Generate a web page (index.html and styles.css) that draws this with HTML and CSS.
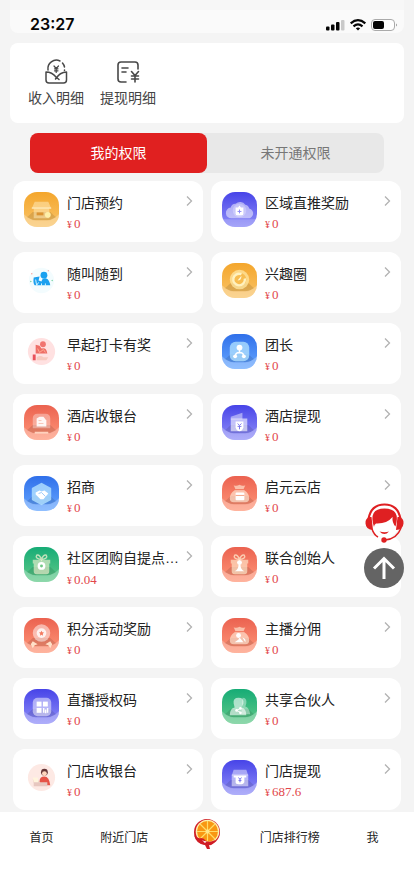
FILE: index.html
```html
<!DOCTYPE html>
<html lang="zh-CN">
<head>
<meta charset="utf-8">
<meta name="viewport" content="width=device-width, initial-scale=1">
<title>我的权限</title>
<link rel="stylesheet" href="styles.css">
</head>
<body>
<svg class="defs" aria-hidden="true">
  <symbol id="ground" viewBox="0 0 36 36">
    <path d="M3 26 9 20.500H27L33 26 27 29H9Z" fill="#000" opacity=".11"/>
    <path d="M0 23Q6 29 12 29H24Q30 29 36 23V36H0Z" fill="#fff" opacity=".28"/>
  </symbol>
  <symbol id="chevron" viewBox="0 0 8 12">
    <path d="M2 1.500 6.500 6 2 10.500" fill="none" stroke="#b2b2b2" stroke-width="1.300"/>
  </symbol>
  <symbol id="bag" viewBox="0 0 36 36">
    <path d="M12 9.500q3 1.500 6-.5 3 2 6 .5l-2 4.500q6 4 6 9 0 4-4 4H12q-4 0-4-4 0-5 6-9Z" fill="#ffe9d6" opacity=".65"/>
    <path d="M13.500 14h9" stroke="#f2765c"/>
  </symbol>
  <symbol id="gift" viewBox="0 0 36 36">
    <path d="M10 17h16v8q0 3-3 3H13q-3 0-3-3ZM9 13h18v4H9Z" fill="#fff3d6" opacity=".6"/>
    <path d="M18 13q-7-1-5-4.500 3-1 5 4.500 2-5.500 5-4.500 2 3.500-5 4.500Z" fill="none" stroke="#fff3d6" stroke-width="1.500" opacity=".7"/>
  </symbol>
</svg>

<header class="status">
  <time class="clock">23:27</time>
  <svg class="signals" viewBox="0 0 72 14" aria-hidden="true">
    <g fill="#050505"><rect x="0" y="8.500" width="3.500" height="4" rx="1"/><rect x="5" y="6.500" width="3.500" height="6" rx="1"/><rect x="10" y="4" width="3.500" height="8.500" rx="1"/></g>
    <rect x="15" y="2" width="3.500" height="10.500" rx="1" fill="#c9c9c9"/>
    <g fill="none" stroke="#050505" stroke-width="2.200"><path d="M24.700 5.300Q32-1 39.300 5.300M27.500 8.300Q32 4.500 36.500 8.300"/></g>
    <path d="M29.800 10.300Q32 8.500 34.200 10.300L32 12.600Z" fill="#050505"/>
    <rect x="45.500" y="1.500" width="23" height="11" rx="3.500" fill="#fff" stroke="#aaa"/>
    <rect x="47" y="3" width="11" height="8" rx="2" fill="#050505"/>
    <path d="M70 5.500q2 1.500 0 3Z" fill="#999"/>
  </svg>
</header>

<main>
  <section class="shortcuts">
    <a class="shortcut" href="#income">
      <svg viewBox="0 0 28 28" fill="none" stroke="#484848" stroke-width="1.500" stroke-linecap="round" stroke-linejoin="round" aria-hidden="true">
        <path d="M6 12A8.500 8.500 0 0 1 18 3M20.500 5A8.500 8.500 0 0 1 22.500 9M22.500 12v.5"/>
        <path d="M14 19Q10 14 4 14V22q0 3 3 3H21.500q3 0 3-3V14Q18 14 13.500 21M14 19 17 21.500"/>
        <path d="M12 8 14.200 10.500 16.500 8M14.200 10.500V14.500M12.500 10.800h3.500M12.500 12.800h3.500" stroke-width="1.200"/>
      </svg>
      <span>收入明细</span>
    </a>
    <a class="shortcut" href="#withdraw">
      <svg viewBox="0 0 28 28" fill="none" stroke="#484848" stroke-width="1.600" stroke-linecap="round" aria-hidden="true">
        <path d="M24 11V7q0-3-3-3H7Q4 4 4 7V21q0 3 3 3h5M8 10h6M8 14h4"/>
        <path d="m17.500 13.500 3.500 4 3.500-4M21 17.500V24M17.500 18h7M17.500 21h7"/>
      </svg>
      <span>提现明细</span>
    </a>
  </section>

  <div class="tabs">
    <button class="tab active" type="button">我的权限</button>
    <button class="tab" type="button">未开通权限</button>
  </div>

  <section class="grid">
    <a class="card" href="#c1">
      <svg class="icon orange" viewBox="0 0 36 36" aria-hidden="true"><use href="#ground"/><path d="M11 10h14l3 7H8ZM10 17h16v10H10Z" fill="#ffedc0" opacity=".5"/><path d="M8 16.500h20" stroke="#fff4cf"/><rect x="13" y="21" width="7" height="3" fill="#dc9331"/><circle cx="24.500" cy="23.500" r="3" fill="#fff0a8"/></svg>
      <span class="info"><span class="title">门店预约</span><span class="price"><small>¥</small>0</span></span>
      <svg class="arrow" aria-hidden="true"><use href="#chevron"/></svg>
    </a>
    <a class="card" href="#c2">
      <svg class="icon violet" viewBox="0 0 36 36" aria-hidden="true"><path d="M0 28h36v8H0Z" fill="#fff" opacity=".2"/><path d="M10 27a5.500 5.500 0 0 1-1-11 5 5 0 0 1 5-4 7 7 0 0 1 10 1 5 5 0 0 1 4 4 5 5 0 0 1-2 10Z" fill="#fff" opacity=".5"/><circle cx="18" cy="19" r="7" fill="#fff" opacity=".25"/><path d="m18 14 1.500 2H22v6q0 2-2 2h-4q-2 0-2-2v-6h2.500Z" fill="#fff"/><path d="M16 20h4M18 18v4" stroke="#8d8af5"/></svg>
      <span class="info"><span class="title">区域直推奖励</span><span class="price"><small>¥</small>0</span></span>
      <svg class="arrow" aria-hidden="true"><use href="#chevron"/></svg>
    </a>
    <a class="card" href="#c3">
      <svg class="icon" viewBox="0 0 36 36" aria-hidden="true"><circle cx="18" cy="18" r="13" fill="#f3fcfe"/><circle cx="20.500" cy="12.500" r="3.500" fill="#1ba0ef"/><path d="m10 15 6-1-1 4 3 1q1-4 5-3 3 1 4 7H11q-2-2-1-8Z" fill="#1ba0ef"/><path d="m12 17 1 6 2-3m3 1v3m4-3v3" stroke="#d5f5ff" fill="none"/><g fill="#f6a7a2"><circle cx="8" cy="11" r=".8"/><circle cx="25" cy="8" r=".7"/></g><g fill="#7bd5a5"><circle cx="7" cy="19" r=".8"/><circle cx="29" cy="18" r=".8"/></g></svg>
      <span class="info"><span class="title">随叫随到</span><span class="price"><small>¥</small>0</span></span>
      <svg class="arrow" aria-hidden="true"><use href="#chevron"/></svg>
    </a>
    <a class="card" href="#c4">
      <svg class="icon orange" viewBox="0 0 36 36" aria-hidden="true"><use href="#ground"/><circle cx="18" cy="17" r="10" fill="#ffe7a1" opacity=".75"/><circle cx="18" cy="17" r="7" fill="#f8bd51"/><path d="M20 11.500A6 6 0 1 0 23.500 16" fill="none" stroke="#fff1bf" stroke-width="2.500"/><path d="m16 18 4-5q0 5-4 5Z" fill="#fff8d7"/></svg>
      <span class="info"><span class="title">兴趣圈</span><span class="price"><small>¥</small>0</span></span>
      <svg class="arrow" aria-hidden="true"><use href="#chevron"/></svg>
    </a>
    <a class="card" href="#c5">
      <svg class="icon" viewBox="0 0 36 36" aria-hidden="true"><circle cx="18" cy="18" r="14" fill="#ffe1e1"/><circle cx="19.500" cy="10.500" r="3" fill="#f17470"/><path d="m12 11 4 1 2 3q5-2 6 5H12Z" fill="#ee6e67"/><path d="m14 15 2 4 4-3 2 3" stroke="#ffad93" fill="none"/><path d="M9 21h3v6H9Z" fill="#e9525b"/><path d="M13 24q4-3 7 0h5l-2 3H13Z" fill="#f7cac0"/></svg>
      <span class="info"><span class="title">早起打卡有奖</span><span class="price"><small>¥</small>0</span></span>
      <svg class="arrow" aria-hidden="true"><use href="#chevron"/></svg>
    </a>
    <a class="card" href="#c6">
      <svg class="icon blue" viewBox="0 0 36 36" aria-hidden="true"><use href="#ground"/><rect x="8" y="8" width="20" height="20" rx="6" fill="#b4e4ff" opacity=".75"/><circle cx="18" cy="14" r="3" fill="#fff"/><path d="M18 16v4M14 22q0-3 4-3t4 3" fill="none" stroke="#fff" stroke-width="1.500"/><circle cx="13.500" cy="23" r="2" fill="#fff"/><circle cx="22.500" cy="23" r="2" fill="#fff"/></svg>
      <span class="info"><span class="title">团长</span><span class="price"><small>¥</small>0</span></span>
      <svg class="arrow" aria-hidden="true"><use href="#chevron"/></svg>
    </a>
    <a class="card" href="#c7">
      <svg class="icon coral" viewBox="0 0 36 36" aria-hidden="true"><use href="#ground"/><path d="M9 24V14q0-5 5-5h8q5 0 5 5v10Z" fill="#fff" opacity=".35"/><path d="M13 22v-8l3-2h4l3 4v6Z" fill="#fff" opacity=".9"/><path d="M15 16h3m-3 3h5" stroke="#f9c4b6"/><path d="M11 28.500h14" stroke="#ffd1bd" stroke-width="2"/></svg>
      <span class="info"><span class="title">酒店收银台</span><span class="price"><small>¥</small>0</span></span>
      <svg class="arrow" aria-hidden="true"><use href="#chevron"/></svg>
    </a>
    <a class="card" href="#c8">
      <svg class="icon violet" viewBox="0 0 36 36" aria-hidden="true"><use href="#ground"/><path d="m9 12 12-4v7H9Z" fill="#fff" opacity=".45"/><path d="M9 14h17v13H9Z" fill="#fff" opacity=".6"/><path d="M14 17h8v6q-1 4-4 4t-4-4Z" fill="#fff"/><path d="m16 19 2 2 2-2m-2 2v4m-2-3h4" stroke="#7c78ef" fill="none"/></svg>
      <span class="info"><span class="title">酒店提现</span><span class="price"><small>¥</small>0</span></span>
      <svg class="arrow" aria-hidden="true"><use href="#chevron"/></svg>
    </a>
    <a class="card" href="#c9">
      <svg class="icon blue" viewBox="0 0 36 36" aria-hidden="true"><use href="#ground"/><path d="m18 8 9 5v11l-9 5-9-5V13Z" fill="#b4e3ff" stroke="#b4e3ff" stroke-width="2" stroke-linejoin="round" opacity=".8"/><path d="m12 17 4-2 2 1 3-1 4 3-5 6h-3l-5-5Z" fill="#fff"/><path d="m15 18 3-1 4 4" stroke="#9ac9fa" fill="none"/></svg>
      <span class="info"><span class="title">招商</span><span class="price"><small>¥</small>0</span></span>
      <svg class="arrow" aria-hidden="true"><use href="#chevron"/></svg>
    </a>
    <a class="card" href="#c10">
      <svg class="icon coral" viewBox="0 0 36 36" aria-hidden="true"><use href="#ground"/><use href="#bag"/><rect x="14" y="17" width="9" height="8" rx="1" fill="#fff"/><path d="M14 20h9" stroke="#f5a384"/></svg>
      <span class="info"><span class="title">启元云店</span><span class="price"><small>¥</small>0</span></span>
      <svg class="arrow" aria-hidden="true"><use href="#chevron"/></svg>
    </a>
    <a class="card" href="#c11">
      <svg class="icon green" viewBox="0 0 36 36" aria-hidden="true"><use href="#ground"/><use href="#gift"/><circle cx="18" cy="19.500" r="4" fill="#fff"/><circle cx="18" cy="19.500" r="1.500" fill="#72c986"/></svg>
      <span class="info"><span class="title">社区团购自提点<span class="dots">…</span></span><span class="price"><small>¥</small>0.04</span></span>
      <svg class="arrow" aria-hidden="true"><use href="#chevron"/></svg>
    </a>
    <a class="card" href="#c12">
      <svg class="icon coral" viewBox="0 0 36 36" aria-hidden="true"><use href="#ground"/><use href="#gift"/><circle cx="18" cy="16" r="2.500" fill="#fff"/><path d="M17 18h2q0 5 4 7H13q4-2 4-7Z" fill="#fff"/></svg>
      <span class="info"><span class="title">联合创始人</span><span class="price"><small>¥</small>0</span></span>
      <svg class="arrow" aria-hidden="true"><use href="#chevron"/></svg>
    </a>
    <a class="card" href="#c13">
      <svg class="icon coral" viewBox="0 0 36 36" aria-hidden="true"><use href="#ground"/><circle cx="18" cy="15.500" r="9" fill="#fff" opacity=".5"/><circle cx="18" cy="15.500" r="5" fill="#fff" opacity=".8"/><path d="m18 13 .8 1.700 1.800.3-1.300 1.300.3 1.900-1.600-.9-1.600.9.300-1.900-1.300-1.300 1.800-.3Z" fill="#f47a60"/><path d="m9 24 5 3-3 1-2 3-2-4Zm18 0-5 3 3 1 2 3 2-4Z" fill="#ffe0c8"/></svg>
      <span class="info"><span class="title">积分活动奖励</span><span class="price"><small>¥</small>0</span></span>
      <svg class="arrow" aria-hidden="true"><use href="#chevron"/></svg>
    </a>
    <a class="card" href="#c14">
      <svg class="icon coral" viewBox="0 0 36 36" aria-hidden="true"><use href="#ground"/><use href="#bag"/><circle cx="17" cy="18" r="2.500" fill="#fff"/><path d="M17 20q1 1 0 2l-4 3h9l-3-4m2-1q4 1 3 5" fill="#fff"/></svg>
      <span class="info"><span class="title">主播分佣</span><span class="price"><small>¥</small>0</span></span>
      <svg class="arrow" aria-hidden="true"><use href="#chevron"/></svg>
    </a>
    <a class="card" href="#c15">
      <svg class="icon violet" viewBox="0 0 36 36" aria-hidden="true"><use href="#ground"/><rect x="9" y="9" width="19" height="19" rx="5" fill="#fff" opacity=".5"/><g fill="#fff"><rect x="13" y="13" width="5" height="5"/><rect x="19.500" y="13" width="5" height="5"/><rect x="13" y="19.500" width="5" height="5"/><path d="M19.500 19.500H21v5h-1.500Zm2 1.500H23v4h-1.500Zm2-1.500h1.500v5h-1.500Z"/></g></svg>
      <span class="info"><span class="title">直播授权码</span><span class="price"><small>¥</small>0</span></span>
      <svg class="arrow" aria-hidden="true"><use href="#chevron"/></svg>
    </a>
    <a class="card" href="#c16">
      <svg class="icon green" viewBox="0 0 36 36" aria-hidden="true"><use href="#ground"/><path d="M21 9q5 0 4 6l-1 3q4 1 5 8h-9Z" fill="#fff" opacity=".4"/><path d="M17 9q6 0 5 6l-2 4q5 1 5 8H8q0-7 5-8l-1-4q-1-6 5-6Z" fill="#fff" opacity=".6"/><path d="m19 20-4 2 4 2" stroke="#fff" fill="none"/><g fill="#fff"><circle cx="19" cy="20" r="1.400"/><circle cx="15" cy="22" r="1.400"/><circle cx="19" cy="24.500" r="1.400"/></g></svg>
      <span class="info"><span class="title">共享合伙人</span><span class="price"><small>¥</small>0</span></span>
      <svg class="arrow" aria-hidden="true"><use href="#chevron"/></svg>
    </a>
    <a class="card" href="#c17">
      <svg class="icon" viewBox="0 0 36 36" aria-hidden="true"><circle cx="18" cy="18" r="14" fill="#fde9e4"/><circle cx="21" cy="12.500" r="3.500" fill="#653637"/><circle cx="21" cy="14" r="2.500" fill="#ffd6bd"/><path d="M16 22q0-5 5-5t6 9h-9Z" fill="#e65347"/><path d="M9 20h5l2 3h8v4H10v-3Z" fill="#e7c7c0"/><path d="M9 18h5l1 5h-5Z" fill="#fff4dd"/></svg>
      <span class="info"><span class="title">门店收银台</span><span class="price"><small>¥</small>0</span></span>
      <svg class="arrow" aria-hidden="true"><use href="#chevron"/></svg>
    </a>
    <a class="card" href="#c18">
      <svg class="icon violet" viewBox="0 0 36 36" aria-hidden="true"><use href="#ground"/><path d="M12 10h13l2 6H10Z" fill="#fff" opacity=".45"/><path d="M10 15h17v12H10Z" fill="#fff" opacity=".5"/><path d="M12 16h13v2h-2v5q-1 2-3 2h-3q-3 0-3-2v-5h-2Z" fill="#fff"/><path d="m17 18 1.500 2 1.500-2m-1.500 2v3m-1.500-2h3" stroke="#7370ed" fill="none"/></svg>
      <span class="info"><span class="title">门店提现</span><span class="price"><small>¥</small>687.6</span></span>
      <svg class="arrow" aria-hidden="true"><use href="#chevron"/></svg>
    </a>
  </section>
</main>

<div class="floating">
  <button type="button" aria-label="客服">
    <svg viewBox="0 0 40 40" aria-hidden="true">
      <circle cx="20.500" cy="20" r="15" fill="#fff"/>
      <path d="M4.500 16Q7 1.500 20.500 1.500T36.500 16" fill="none" stroke="#df2022" stroke-width="2.200"/>
      <path d="M10 24Q4 5.500 20.500 5.500 37 5.500 31.500 23.500 28 20 28.500 14 23 21 12 20.500 10 21.500 10 24Z" fill="#df2022"/>
      <path d="M6 14q-5 1-4.500 6.500Q2 27 9 27L7.500 14Zm29 0q5 1 4.500 6.500Q39 27 32 27l1.500-13Z" fill="#df2022"/>
      <path d="M8 26q2 6 6 8M37 25q-4 11-16 12" fill="none" stroke="#df2022" stroke-width="1.500"/>
      <path d="M15.500 28.500q5 5 9.500 0-4 1.500-9.500 0Z" fill="#df2022"/>
      <circle cx="20" cy="37" r="2.700" fill="#df2022"/>
    </svg>
  </button>
  <button type="button" aria-label="返回顶部">
    <svg viewBox="0 0 40 40" aria-hidden="true"><circle cx="20" cy="20" r="20" fill="#646464"/><path d="M20 31V10.500M10 20.500l10-10 10 10" fill="none" stroke="#fff" stroke-width="3"/></svg>
  </button>
</div>

<nav class="tabbar">
  <a href="#home">首页</a>
  <a href="#near">附近门店</a>
  <a href="#center" aria-label="中心">
    <svg class="logo" viewBox="0 0 32 32" aria-hidden="true">
      <circle cx="16" cy="14" r="13" fill="#cf1c25"/>
      <circle cx="16.500" cy="13.500" r="11.800" fill="#fff0ad"/>
      <circle cx="16.500" cy="13.500" r="10.500" fill="#f99712"/>
      <path d="M16.500 3v21M6 13.500h21M9 6l15 15M24 6 9 21" stroke="#ffdc68" stroke-width="1.200"/>
      <circle cx="16.500" cy="13.500" r="2" fill="#ffe78a"/>
      <path d="M3 17q3 4 7 3 3 0 5 3 4 2 9-1-2 6-6 5l1 4h-3l-2-4Q5 26 3 17Z" fill="#cf1c25"/>
      <path d="M11 22q3 2 5 1l-2 2Z" fill="#fff"/>
    </svg>
  </a>
  <a href="#rank">门店排行榜</a>
  <a href="#me">我</a>
</nav>
</body>
</html>
```
FILE: styles.css
```css
* {
  box-sizing: border-box;
}

body {
  margin: 0;
  min-height: 100vh;
  background: #f4f4f4;
  color: #222;
  font-family: "Noto Sans CJK SC", sans-serif;
  font-size: 14px;
}

a {
  color: inherit;
  text-decoration: none;
}

button {
  border: 0;
  padding: 0;
  background: none;
  font: inherit;
  cursor: pointer;
}

svg {
  display: block;
}

.defs {
  position: absolute;
  width: 0;
  height: 0;
}

.status {
  display: flex;
  justify-content: space-between;
  align-items: flex-end;
  height: 33px;
  margin: 0 10px;
  padding: 0 6px 0 20px;
  border-radius: 0 0 8px 8px;
  background: linear-gradient(#f7f7f7 10px, #fafafa 10px);
}

.clock {
  color: #050505;
  font: 600 16px/18px Inter, sans-serif;
}

.signals {
  width: 72px;
  height: 14px;
  margin-bottom: 1px;
}

.shortcuts {
  display: flex;
  gap: 16px;
  height: 80px;
  margin: 10px 10px 0;
  padding: 14px 18px;
  border-radius: 8px;
  background: #fff;
}

.shortcut {
  display: flex;
  flex-direction: column;
  align-items: center;
  color: #444;
  line-height: 20px;
}

.shortcut svg {
  width: 28px;
  height: 30px;
}

.tabs {
  display: flex;
  height: 40px;
  margin: 10px 30px 8px;
  border-radius: 8px;
  background: #e8e8e8;
}

.tab {
  flex: 1;
  padding-bottom: 2px;
  border-radius: 8px;
  color: #777;
}

.tab.active {
  background: #e02020;
  color: #fff;
}

.grid {
  display: grid;
  grid-template-columns: 1fr 1fr;
  gap: 10px 8px;
  padding: 0 13px 96px;
}

.card {
  display: flex;
  align-items: flex-start;
  gap: 8px;
  min-width: 0;
  height: 61px;
  padding: 11px 10px 0 11px;
  border-radius: 12px;
  background: #fff;
}

.icon {
  flex: none;
  width: 35px;
  height: 35px;
  border-radius: 13px;
}

.orange {
  background: linear-gradient(#f4a62c, #f9c469);
}

.violet {
  background: linear-gradient(#4744e8, #908ff8);
}

.blue {
  background: linear-gradient(#3070ea, #65a6ff);
}

.coral {
  background: linear-gradient(#eb6250, #ff9779);
}

.green {
  background: linear-gradient(#16ac76, #62c989);
}

.info {
  flex: 1;
  min-width: 0;
}

.title {
  display: block;
  line-height: 20px;
  white-space: nowrap;
}

.dots {
  font-family: "Liberation Sans", sans-serif;
}

.price {
  display: flex;
  align-items: baseline;
  gap: 2px;
  color: #e2474b;
  font: 13px/24px "Liberation Serif", serif;
}

.price small {
  font-size: 10px;
}

.arrow {
  flex: none;
  width: 8px;
  height: 12px;
  margin: 3px 0 0 -8px;
}

.floating {
  position: fixed;
  right: 10px;
  bottom: 308px;
  display: grid;
  gap: 5px;
}

.floating svg {
  width: 40px;
  height: 40px;
}

.tabbar {
  position: fixed;
  right: 0;
  bottom: 0;
  left: 0;
  display: grid;
  grid-template-columns: repeat(5, 1fr);
  place-items: center;
  height: 84px;
  padding-bottom: 36px;
  background: #fff;
  font-size: 12px;
}

.logo {
  width: 32px;
  height: 32px;
  margin-bottom: 4px;
}
```
